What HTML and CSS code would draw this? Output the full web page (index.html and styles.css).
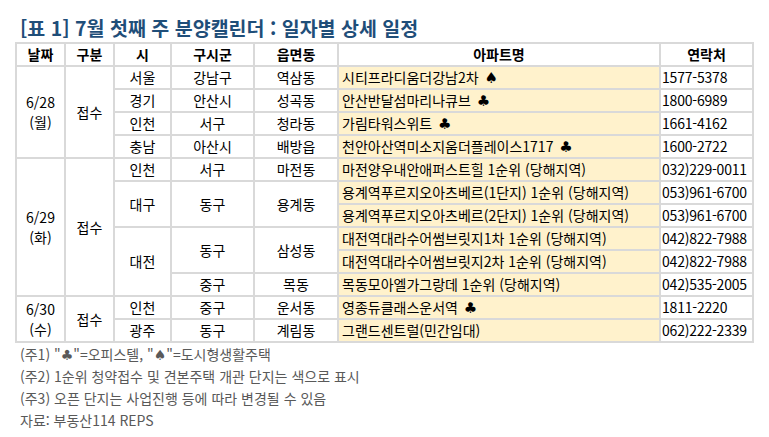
FILE: index.html
```html
<!DOCTYPE html>
<html lang="ko">
<head>
<meta charset="utf-8">
<link rel="stylesheet" href="styles.css">
</head>
<body>
<div class="page">
  <h1 class="title">[표 1] 7월 첫째 주 분양캘린더 : 일자별 상세 일정</h1>
  <table class="cal">
    <colgroup>
      <col class="c-date"><col class="c-type"><col class="c-si"><col class="c-gu"><col class="c-dong"><col class="c-apt"><col class="c-tel">
    </colgroup>
    <thead>
      <tr><th>날짜</th><th>구분</th><th>시</th><th>구시군</th><th>읍면동</th><th>아파트명</th><th>연락처</th></tr>
    </thead>
    <tbody>
      <tr>
        <td rowspan="4" class="two">6/28<br>(월)</td>
        <td rowspan="4">접수</td>
        <td>서울</td><td>강남구</td><td>역삼동</td>
        <td class="apt">시티프라디움더강남2차 <span class="suit">♠</span></td><td class="tel">1577-5378</td>
      </tr>
      <tr><td>경기</td><td>안산시</td><td>성곡동</td><td class="apt">안산반달섬마리나큐브 <span class="suit">♣</span></td><td class="tel">1800-6989</td></tr>
      <tr><td>인천</td><td>서구</td><td>청라동</td><td class="apt">가림타워스위트 <span class="suit">♣</span></td><td class="tel">1661-4162</td></tr>
      <tr><td>충남</td><td>아산시</td><td>배방읍</td><td class="apt">천안아산역미소지움더플레이스1717 <span class="suit">♣</span></td><td class="tel">1600-2722</td></tr>

      <tr>
        <td rowspan="6" class="two">6/29<br>(화)</td>
        <td rowspan="6">접수</td>
        <td>인천</td><td>서구</td><td>마전동</td>
        <td class="apt">마전양우내안애퍼스트힐 1순위 (당해지역)</td><td class="tel">032)229-0011</td>
      </tr>
      <tr><td rowspan="2">대구</td><td rowspan="2">동구</td><td rowspan="2">용계동</td><td class="apt">용계역푸르지오아츠베르(1단지) 1순위 (당해지역)</td><td class="tel">053)961-6700</td></tr>
      <tr><td class="apt">용계역푸르지오아츠베르(2단지) 1순위 (당해지역)</td><td class="tel">053)961-6700</td></tr>
      <tr><td rowspan="3">대전</td><td rowspan="2">동구</td><td rowspan="2">삼성동</td><td class="apt">대전역대라수어썸브릿지1차 1순위 (당해지역)</td><td class="tel">042)822-7988</td></tr>
      <tr><td class="apt">대전역대라수어썸브릿지2차 1순위 (당해지역)</td><td class="tel">042)822-7988</td></tr>
      <tr><td>중구</td><td>목동</td><td class="apt">목동모아엘가그랑데 1순위 (당해지역)</td><td class="tel">042)535-2005</td></tr>

      <tr>
        <td rowspan="2" class="two">6/30<br>(수)</td>
        <td rowspan="2">접수</td>
        <td>인천</td><td>중구</td><td>운서동</td>
        <td class="apt">영종듀클래스운서역 <span class="suit">♣</span></td><td class="tel">1811-2220</td>
      </tr>
      <tr><td>광주</td><td>동구</td><td>계림동</td><td class="apt">그랜드센트럴(민간임대)</td><td class="tel">062)222-2339</td></tr>
    </tbody>
  </table>
  <div class="notes">
    <p>(주1) "<span class="suit">♣</span>"=오피스텔, "<span class="suit">♠</span>"=도시형생활주택</p>
    <p>(주2) 1순위 청약접수 및 견본주택 개관 단지는 색으로 표시</p>
    <p>(주3) 오픈 단지는 사업진행 등에 따라 변경될 수 있음</p>
    <p>자료: 부동산114 REPS</p>
  </div>
</div>
</body>
</html>
```

FILE: styles.css
```css
html, body {
  margin: 0;
  padding: 0;
  background: #ffffff;
}
body {
  font-family: "Noto Sans CJK KR", "Noto Sans", sans-serif;
  color: #000;
}
.page {
  padding: 14px 0 0 15px;
}
.title {
  margin: 0 0 0 5px;
  font-size: 19.5px;
  line-height: 28px;
  height: 28px;
  font-weight: bold;
  color: #1f4e79;
  white-space: nowrap;
}
.cal {
  border-collapse: collapse;
  table-layout: fixed;
  width: 737px;
  border: 2px solid #d9d9d9;
  font-size: 14px;
}
.c-date { width: 49px; }
.c-type { width: 49px; }
.c-si { width: 57px; }
.c-gu { width: 83px; }
.c-dong { width: 84px; }
.c-apt { width: 322px; }
.c-tel { width: 93px; }
.cal th, .cal td {
  border: 2px solid #d9d9d9;
  padding: 0;
  height: 21px;
  line-height: 21px;
  text-align: center;
  vertical-align: middle;
  white-space: nowrap;
  overflow: hidden;
}
.cal th {
  font-weight: bold;
}
.cal td.two {
  line-height: 20px;
}
.cal td.apt {
  background: #fff2cc;
  text-align: left;
  padding-left: 3px;
}
.cal td.tel {
  text-align: left;
  padding-left: 1px;
  letter-spacing: -0.2px;
}
.suit {
  font-family: "DejaVu Sans", sans-serif;
  font-size: 15px;
  line-height: 10px;
  display: inline-block;
  vertical-align: baseline;
  margin-left: 2px;
}
.notes {
  color: #595959;
  font-size: 14px;
}
.notes .suit {
  font-size: 14px;
  margin-left: 0;
}
.notes p {
  margin: 0;
  padding-left: 5px;
  height: 22px;
  line-height: 22px;
  white-space: nowrap;
}
```
